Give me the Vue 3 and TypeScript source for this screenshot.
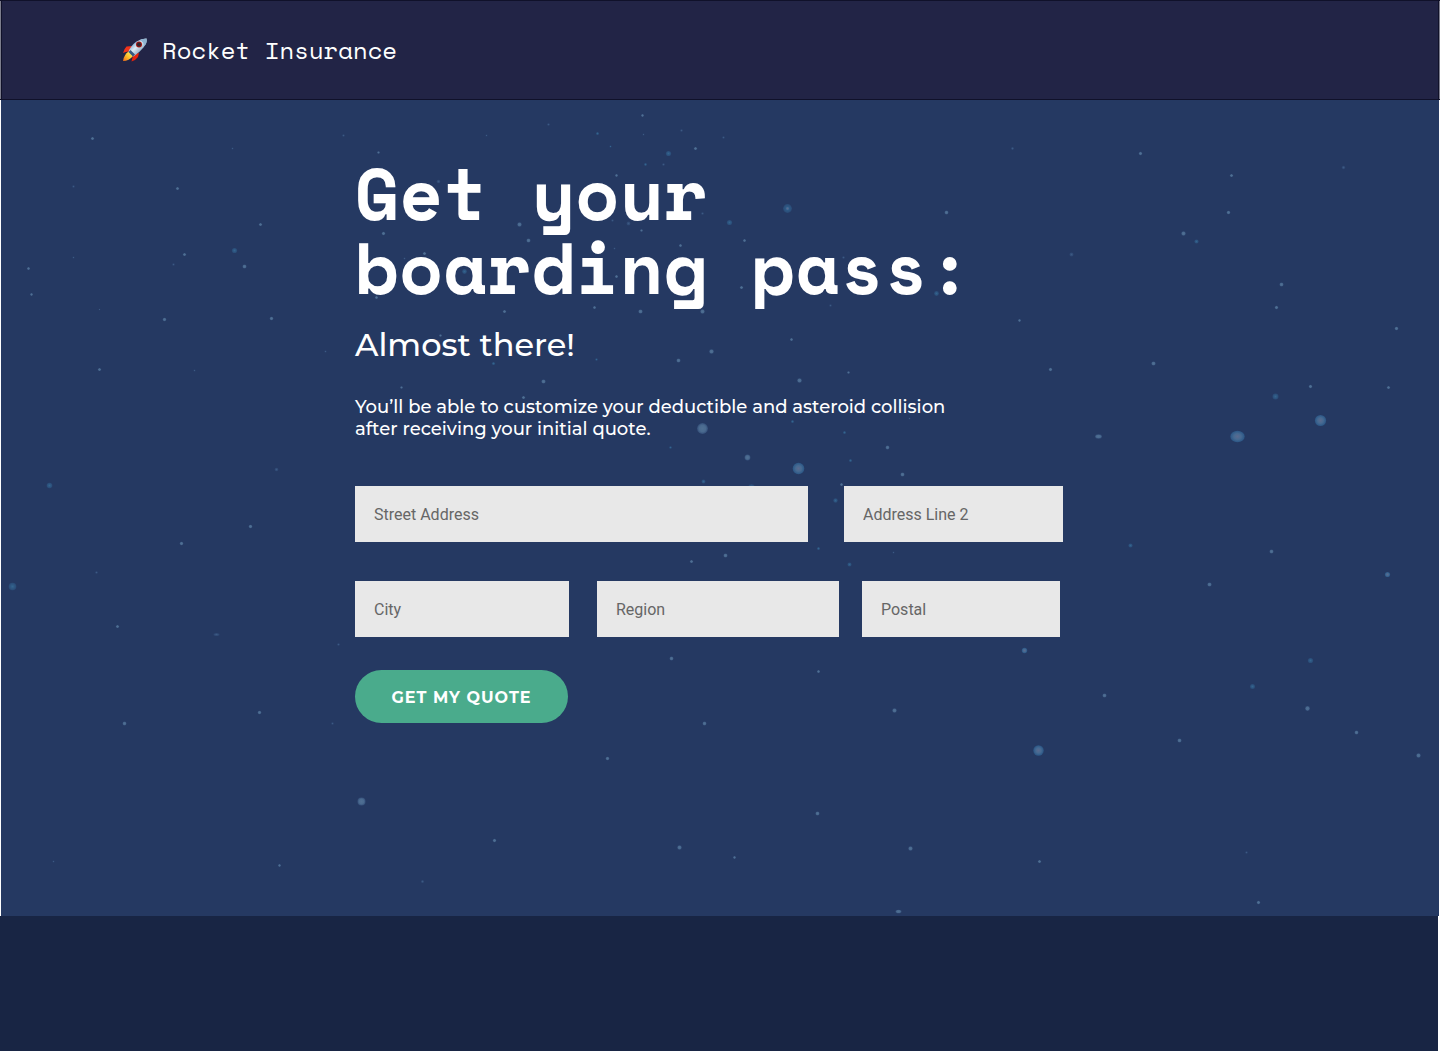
<script setup lang="ts">
import { reactive } from 'vue'

type Tone = 'pale' | 'blue' | 'dim' | 'glow'
type Star = [x: number, y: number, rx: number, tone: Tone, ry?: number]

const stars: Star[] = [
  [92, 138, 1.6, 'pale'], [177, 188, 1.6, 'pale'], [73, 186, 1.2, 'dim'], [232, 148, 1, 'dim'],
  [260, 224, 1.6, 'pale'], [234, 250, 2.6, 'blue'], [184, 254, 1.6, 'pale'], [173, 264, 1.2, 'dim'],
  [244, 266, 2, 'pale'], [28, 268, 1.5, 'pale'], [73, 257, 1, 'dim'], [31, 294, 1.4, 'pale'],
  [99, 309, 0.8, 'dim'], [164, 319, 1.8, 'pale'], [271, 318, 1.8, 'pale'], [99, 369, 1.6, 'pale'],
  [194, 370, 1, 'dim'], [325, 351, 1.1, 'dim'], [276, 469, 1.8, 'dim'], [49, 485, 2.8, 'blue'],
  [343, 135, 1.2, 'dim'], [378, 152, 1.3, 'pale'], [438, 181, 1.8, 'dim'], [383, 233, 1.7, 'pale'],
  [424, 253, 1.6, 'pale'], [404, 258, 1, 'dim'], [464, 271, 2.4, 'blue'], [376, 297, 1.5, 'pale'],
  [440, 335, 1.3, 'pale'], [401, 387, 1.3, 'pale'],
  [642, 115, 1.4, 'pale'], [548, 124, 1.3, 'dim'], [486, 135, 1, 'dim'], [597, 133, 1.5, 'blue'],
  [681, 130, 1.3, 'dim'], [643, 134, 0.9, 'dim'], [610, 146, 1, 'blue'], [723, 137, 1.2, 'dim'],
  [668, 153, 2.6, 'blue'], [695, 148, 1.6, 'pale'], [645, 164, 1.4, 'blue'], [663, 164, 1.3, 'dim'],
  [616, 175, 1.4, 'pale'], [519, 224, 2.2, 'pale'], [528, 240, 2, 'pale'], [702, 213, 1.3, 'dim'],
  [612, 220, 1.2, 'dim'], [628, 223, 1.9, 'dim'], [641, 230, 1.3, 'pale'], [729, 222, 2.6, 'blue'],
  [787, 208, 4.4, 'blue'], [787, 208, 2, 'glow'], [946, 212, 1.9, 'pale'], [744, 240, 1.5, 'pale'],
  [680, 245, 1.5, 'pale'], [614, 248, 1, 'dim'], [616, 276, 1.5, 'pale'], [843, 257, 1.3, 'dim'],
  [741, 287, 1.6, 'pale'], [936, 293, 2.4, 'blue'], [830, 305, 1.2, 'dim'], [594, 307, 1.5, 'pale'],
  [504, 311, 1.6, 'pale'], [640, 311, 2.1, 'pale'], [702, 311, 2.2, 'pale'], [791, 339, 1.5, 'pale'],
  [711, 351, 2.3, 'pale'], [678, 360, 2, 'pale'], [596, 359, 1.2, 'blue'], [493, 363, 1.6, 'blue'],
  [543, 381, 2.1, 'pale'], [799, 380, 2.3, 'pale'], [848, 372, 1.3, 'pale'], [523, 397, 1.6, 'pale'],
  [792, 421, 1.5, 'blue'], [909, 418, 1, 'dim'], [702, 428, 5.4, 'pale'], [844, 432, 1.5, 'blue'],
  [747, 457, 2.9, 'pale'], [670, 447, 1.3, 'blue'], [887, 447, 1.9, 'pale'], [798, 468, 5.8, 'glow'],
  [850, 460, 1.5, 'blue'], [902, 474, 2, 'pale'], [703, 481, 1.9, 'blue'], [751, 487, 3.2, 'blue'],
  [841, 484, 1.5, 'pale'], [835, 500, 2.2, 'blue'],
  [1012, 148, 1.4, 'dim'], [1140, 153, 1.7, 'pale'], [1231, 175, 1.6, 'pale'], [1343, 167, 1.7, 'dim'],
  [1228, 212, 1.8, 'pale'], [1183, 233, 2.2, 'pale'], [1196, 241, 2.1, 'blue'], [1071, 254, 2, 'dim'],
  [1281, 284, 2, 'pale'], [1276, 307, 1.7, 'pale'], [1019, 320, 1.4, 'pale'], [1396, 328, 1.8, 'pale'],
  [1153, 363, 2.1, 'pale'], [1050, 369, 1.7, 'pale'], [1310, 386, 1.7, 'pale'], [1388, 387, 1.6, 'pale'],
  [1275, 396, 3, 'blue'], [1320, 420, 5.6, 'glow'], [1237, 436, 7.2, 'glow', 5.8], [1098, 436, 3.4, 'pale', 2.2],
  [250, 526, 1.8, 'pale'], [181, 543, 1.8, 'pale'], [96, 572, 1.3, 'dim'], [12, 586, 3.8, 'blue'],
  [117, 626, 1.6, 'pale'], [216, 634, 3, 'dim', 1.5], [338, 644, 1.3, 'dim'], [259, 712, 1.8, 'pale'],
  [124, 723, 1.9, 'pale'], [332, 723, 1.2, 'dim'], [361, 801, 4, 'pale'], [279, 865, 1.4, 'pale'],
  [53, 861, 1, 'dim'], [422, 881, 1.5, 'dim'], [494, 840, 1.7, 'pale'], [607, 758, 1.8, 'pale'],
  [704, 723, 1.9, 'pale'], [671, 658, 1.9, 'pale'], [691, 561, 1.6, 'pale'], [725, 555, 2, 'pale'],
  [818, 548, 1.5, 'blue'], [849, 564, 2, 'blue'], [893, 552, 1, 'dim'], [818, 671, 1.5, 'pale'],
  [894, 710, 2.2, 'pale'], [817, 813, 2, 'pale'], [679, 847, 2.2, 'pale'], [734, 857, 1.4, 'pale'],
  [910, 848, 2.2, 'pale'], [898, 911, 3, 'pale', 1.8], [1039, 861, 1.6, 'pale'], [1038, 750, 5.2, 'glow'],
  [1024, 650, 2.7, 'glow'], [1104, 695, 2, 'pale'], [1179, 740, 2, 'pale'], [1130, 545, 2.1, 'blue'],
  [1271, 551, 2, 'pale'], [1209, 584, 2.1, 'pale'], [1387, 574, 2.6, 'glow'], [1310, 660, 2.6, 'blue'],
  [1252, 686, 2.5, 'blue'], [1307, 708, 2.4, 'pale'], [1356, 732, 1.9, 'pale'], [1418, 755, 2.2, 'pale'],
  [1246, 852, 1.2, 'dim'], [1258, 902, 1.7, 'pale'],
]

const form = reactive({ street: '', line2: '', city: '', region: '', postal: '' })
</script>

<template>
  <div class="page">
    <header class="topbar">
      <a class="brand" href="#">
        <svg class="rocket" viewBox="0 0 50 48" aria-hidden="true">
          <defs>
            <linearGradient id="hull" x1="0" y1="0" x2="1" y2="1">
              <stop offset="0.1" stop-color="#3f83c0" />
              <stop offset="0.45" stop-color="#dfeaf2" />
              <stop offset="0.8" stop-color="#6f94b4" />
            </linearGradient>
            <linearGradient id="flame" x1="1" y1="0" x2="0" y2="1">
              <stop offset="0" stop-color="#fff27a" />
              <stop offset="0.5" stop-color="#fdc52c" />
              <stop offset="1" stop-color="#f06a16" />
            </linearGradient>
          </defs>
          <path d="M20 16 L8 17 Q3 22 1 30 Q8 26 15 27 Z" fill="#f0331a" />
          <path d="M33 30 L31 38 Q26 45 18 47 Q20 40 21 33 Z" fill="#e6230c" />
          <path d="M12 27 Q3 33 1 46 Q13 46 21 36 Z" fill="url(#flame)" />
          <path d="M48 1 Q50 9 42 19 Q34 29 22 37 L12 27 Q17 15 28 7 Q38 1 48 1 Z" fill="url(#hull)" />
          <path d="M48 1 Q50 9 44 16 Q43 8 34 4 Q41 1 48 1 Z" fill="#8fb3cf" />
          <path d="M16 24 L25 33 L21 37 L12 28 Z" fill="#36597f" />
          <circle cx="33" cy="13" r="6" fill="#a51813" />
          <circle cx="33" cy="13" r="4" fill="#30242f" />
        </svg>
        <span>Rocket Insurance</span>
      </a>
    </header>

    <main class="hero">
      <svg class="sky" viewBox="0.5 99.5 1438 816" preserveAspectRatio="xMidYMid slice" aria-hidden="true">
        <defs>
          <radialGradient id="star-pale">
            <stop offset="0" stop-color="#506f93" />
            <stop offset="0.6" stop-color="#4a6a8f" />
            <stop offset="1" stop-color="#35507b" />
          </radialGradient>
          <radialGradient id="star-blue">
            <stop offset="0" stop-color="#34658f" />
            <stop offset="1" stop-color="#294a76" />
          </radialGradient>
          <radialGradient id="star-glow">
            <stop offset="0" stop-color="#5b6a8f" />
            <stop offset="0.5" stop-color="#466a92" />
            <stop offset="1" stop-color="#2a5686" />
          </radialGradient>
          <radialGradient id="star-dim">
            <stop offset="0" stop-color="#3d5a83" />
            <stop offset="1" stop-color="#2b4470" />
          </radialGradient>
        </defs>
        <ellipse
          v-for="([x, y, rx, tone, ry], i) in stars"
          :key="i"
          :cx="x"
          :cy="y"
          :rx="rx"
          :ry="ry ?? rx"
          :fill="`url(#star-${tone})`"
        />
      </svg>

      <div class="content">
        <h1>Get your<br />boarding pass:</h1>
        <h2>Almost there!</h2>
        <p>
          You’ll be able to customize your deductible and asteroid collision<br />
          after receiving your initial quote.
        </p>
        <form @submit.prevent>
          <div class="row row-street">
            <input v-model="form.street" class="street" type="text" placeholder="Street Address" aria-label="Street Address" />
            <input v-model="form.line2" class="line2" type="text" placeholder="Address Line 2" aria-label="Address Line 2" />
          </div>
          <div class="row row-city">
            <input v-model="form.city" class="city" type="text" placeholder="City" aria-label="City" />
            <input v-model="form.region" class="region" type="text" placeholder="Region" aria-label="Region" />
            <input v-model="form.postal" class="postal" type="text" placeholder="Postal" aria-label="Postal" />
          </div>
          <button type="submit">GET MY QUOTE</button>
        </form>
      </div>
    </main>

    <footer class="footer"></footer>
  </div>
</template>

<style>
body {
  margin: 0;
  background: #fff;
}
</style>

<style scoped>
.page {
  display: flex;
  flex-direction: column;
  min-height: 100vh;
  color: #fff;
  font-family: Montserrat, Inter, sans-serif;
}
.topbar {
  box-sizing: border-box;
  min-height: 100px;
  display: flex;
  align-items: center;
  padding: 0 122px;
  background: #222446;
  border: solid #10112a;
  border-width: 1px 0;
  box-shadow: inset 1px 0 #7c7d8c, inset -1px 0 #7c7d8c, inset 2px 0 #10112a, inset -2px 0 #10112a;
}
.brand {
  display: flex;
  align-items: center;
  gap: 14px;
  color: #fff;
  text-decoration: none;
  font: 24px/32px "Space Mono", "Liberation Mono", monospace;
}
.rocket {
  width: 26px;
  height: 24px;
}
.hero {
  position: relative;
  box-sizing: border-box;
  min-height: 816px;
  margin: 0 1px;
  padding: 56px 24px 64px;
  background: #253962;
}
.sky {
  position: absolute;
  inset: 0;
  width: 100%;
  height: 100%;
}
.content {
  position: relative;
  max-width: 730px;
  margin: 0 auto;
}
h1 {
  margin: 0;
  font: 700 72px/74px "Space Mono", "DejaVu Sans Mono", monospace;
}
h2 {
  margin: 21px 0 0;
  font-size: 32px;
  font-weight: 500;
  line-height: 40px;
}
p {
  margin: 31px 0 0;
  font-size: 18px;
  font-weight: 500;
  line-height: 22px;
}
form {
  margin-top: 46px;
}
.row {
  display: flex;
}
.row-street {
  max-width: 708px;
  gap: 36px;
}
.row-city {
  max-width: 705px;
  margin-top: 39px;
}
input {
  box-sizing: border-box;
  min-width: 0;
  height: 56px;
  padding: 0 19px;
  border: 0;
  border-radius: 0;
  background: #e8e8e8;
  color: #333;
  font: 16px/24px Roboto, sans-serif;
}
input::placeholder {
  color: #666;
  opacity: 1;
}
.street {
  flex: 0 1 453px;
}
.line2 {
  flex: 0 1 219px;
}
.city {
  flex: 0 1 214px;
}
.region {
  flex: 0 1 242px;
  margin: 0 23px 0 28px;
}
.postal {
  flex: 0 1 198px;
}
button {
  display: block;
  width: 213px;
  height: 53px;
  margin-top: 33px;
  padding: 2px 0 0;
  border: 0;
  border-radius: 27px;
  background: #4aab8c;
  color: #fff;
  font: 700 16px/24px Montserrat, Inter, sans-serif;
  letter-spacing: 1px;
}
.footer {
  flex: 1 0 auto;
  min-height: 135px;
  margin-right: 2px;
  background: #182544;
}
</style>
